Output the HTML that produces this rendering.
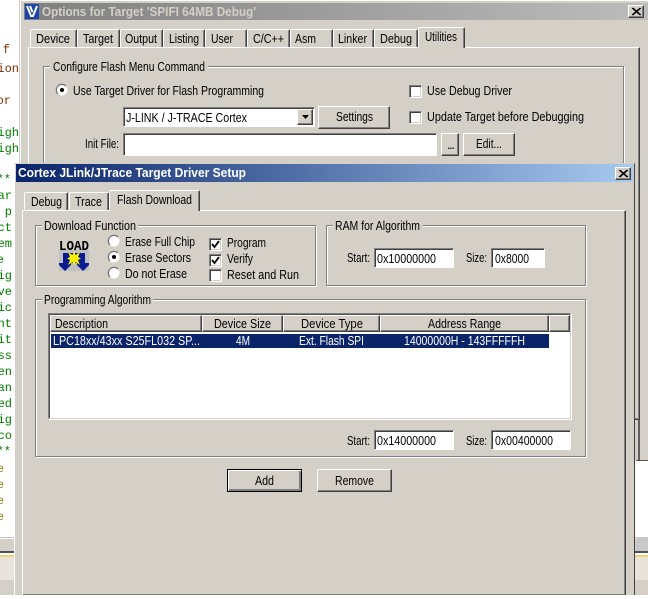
<!DOCTYPE html>
<html><head><meta charset="utf-8"><style>
html,body{margin:0;padding:0;background:#fff}
#r{position:relative;width:648px;height:599px;overflow:hidden;background:#fff}
#r div{position:absolute;box-sizing:border-box}
.g{background:#d4d0c8}
.btn{background:#d4d0c8;border:1px solid;border-color:#fff #404040 #404040 #fff;box-shadow:inset -1px -1px #808080}
.in{background:#fff;border:1px solid;border-color:#808080 #fff #fff #808080;box-shadow:inset 1px 1px #404040}
.grp{border:1px solid #808080;box-shadow:1px 1px #fff,inset 1px 1px #fff}
.page{background:#d4d0c8;border:1px solid;border-color:#fff #404040 #404040 #fff;box-shadow:inset -1px -1px #808080}
.tab{background:#d4d0c8;border:1px solid;border-color:#fff #404040 transparent #fff;border-bottom:0;border-radius:2px 2px 0 0;box-shadow:inset -1px 0 #808080}
.hd{background:#d4d0c8;border:1px solid;border-color:#fff #404040 #404040 #fff;box-shadow:inset -1px -1px #808080}
.chk{background:#fff;border:1px solid;border-color:#808080 #fff #fff #808080;box-shadow:inset 1px 1px #404040,inset -1px -1px #d4d0c8}
svg{position:absolute;left:0;top:0}
text{font-family:"Liberation Sans",sans-serif;font-size:12.5px;fill:#000}
.t{font-weight:bold;font-size:12.5px}
.m{font-family:"Liberation Mono",monospace;font-size:12px;text-anchor:end}
.br{fill:#8a2c00}.gr{fill:#008000}.ol{fill:#808000}
</style></head><body><div id="r">

<!-- background strips behind dialogs -->
<div style="left:0;top:537px;width:648px;height:1px;background:#c8c4bc"></div>
<div class="g" style="left:0;top:539px;width:648px;height:12px"></div>
<div style="left:0;top:551px;width:648px;height:2px;background:#505050"></div>
<div style="left:0;top:555px;width:648px;height:2px;background:#f8d070"></div>
<div style="left:0;top:557px;width:648px;height:23px;background:#e8e4dc"></div>
<div class="g" style="left:0;top:580px;width:648px;height:15px"></div>
<div style="left:636px;top:537px;width:12px;height:14px;background:#c8c8c8"></div>

<!-- outer dialog -->
<div class="g" style="left:19px;top:0;width:640px;height:460px;border-left:1px solid #d4d0c8;box-shadow:inset 1px 1px #fff"></div>
<div style="left:636px;top:460px;width:12px;height:1px;background:#505050"></div>
<div style="left:24px;top:3px;width:624px;height:17px;background:linear-gradient(90deg,#808080,#bcbcbc)"></div>
<div class="btn" style="left:628px;top:5px;width:16px;height:13px"></div>

<div class="page" style="left:28px;top:47px;width:612px;height:373px"></div>
<div style="left:638px;top:420px;width:2px;height:40px;background:#606060"></div>
<div class="tab" style="left:30px;top:29px;width:47px;height:18px"></div>
<div class="tab" style="left:77px;top:29px;width:43px;height:18px"></div>
<div class="tab" style="left:120px;top:29px;width:43px;height:18px"></div>
<div class="tab" style="left:163px;top:29px;width:42px;height:18px"></div>
<div class="tab" style="left:205px;top:29px;width:42px;height:18px"></div>
<div class="tab" style="left:247px;top:29px;width:43px;height:18px"></div>
<div class="tab" style="left:290px;top:29px;width:43px;height:18px"></div>
<div class="tab" style="left:333px;top:29px;width:41px;height:18px"></div>
<div class="tab" style="left:374px;top:29px;width:44px;height:18px"></div>
<div class="tab" style="left:418px;top:27px;width:47px;height:21px"></div>

<div class="grp" style="left:43px;top:66px;width:581px;height:120px"></div>
<div class="g" style="left:50px;top:62px;width:158px;height:10px"></div>
<div class="chk" style="left:409px;top:85px;width:13px;height:13px"></div>
<div class="chk" style="left:409px;top:111px;width:13px;height:13px"></div>
<div class="in" style="left:123px;top:107px;width:192px;height:20px"></div>
<div class="btn" style="left:297px;top:109px;width:16px;height:16px"></div>
<div class="btn" style="left:318px;top:106px;width:72px;height:23px"></div>
<div class="in" style="left:123px;top:133px;width:314px;height:23px"></div>
<div class="btn" style="left:441px;top:133px;width:18px;height:23px"></div>
<div class="btn" style="left:463px;top:133px;width:52px;height:23px"></div>

<!-- inner dialog -->
<div class="g" style="left:14px;top:163px;width:621px;height:432px;border-top:1px solid #d4d0c8;border-left:1px solid #fff;border-right:1px solid #404040;box-shadow:inset 1px 0 #d4d0c8"></div>
<div style="left:16px;top:164px;width:617px;height:18px;background:linear-gradient(90deg,#0a246a,#a6caf0)"></div>
<div class="btn" style="left:615px;top:167px;width:16px;height:13px"></div>

<div class="page" style="left:22px;top:210px;width:604px;height:385px;border-bottom:0"></div>
<div class="tab" style="left:24px;top:192px;width:44px;height:18px"></div>
<div class="tab" style="left:69px;top:192px;width:40px;height:18px"></div>
<div class="tab" style="left:109px;top:190px;width:91px;height:21px"></div>

<div class="grp" style="left:35px;top:225px;width:281px;height:61px"></div>
<div class="g" style="left:42px;top:221px;width:96px;height:10px"></div>
<div class="grp" style="left:326px;top:225px;width:260px;height:61px"></div>
<div class="g" style="left:333px;top:221px;width:90px;height:10px"></div>
<div class="grp" style="left:35px;top:299px;width:551px;height:158px"></div>
<div class="g" style="left:42px;top:295px;width:111px;height:10px"></div>

<div class="chk" style="left:209px;top:238px;width:13px;height:13px"></div>
<div class="chk" style="left:209px;top:254px;width:13px;height:13px"></div>
<div class="chk" style="left:209px;top:269px;width:13px;height:13px"></div>

<div class="in" style="left:374px;top:248px;width:80px;height:20px"></div>
<div class="in" style="left:491px;top:248px;width:54px;height:20px"></div>

<!-- list -->
<div class="in" style="left:48px;top:313px;width:523px;height:106px;border-color:#808080 #d4d0c8 #d4d0c8 #808080;box-shadow:inset 1px 1px #505050,1px 1px #fff"></div>
<div class="hd" style="left:50px;top:315px;width:152px;height:17px"></div>
<div class="hd" style="left:202px;top:315px;width:81px;height:17px"></div>
<div class="hd" style="left:283px;top:315px;width:97px;height:17px"></div>
<div class="hd" style="left:380px;top:315px;width:169px;height:17px"></div>
<div class="hd" style="left:549px;top:315px;width:21px;height:17px"></div>
<div style="left:51px;top:334px;width:498px;height:14px;background:#0a246a"></div>

<div class="in" style="left:374px;top:430px;width:80px;height:20px"></div>
<div class="in" style="left:491px;top:430px;width:80px;height:20px"></div>

<div class="btn" style="left:227px;top:469px;width:75px;height:23px;outline:1px solid #000;outline-offset:-1px;box-shadow:inset 1px 1px #fff,inset -2px -2px #808080"></div>
<div class="btn" style="left:317px;top:469px;width:75px;height:23px"></div>

<svg width="648" height="599" viewBox="0 0 648 599">
<defs>
<clipPath id="c1"><rect x="0" y="0" width="19" height="163"/></clipPath>
<clipPath id="c2"><rect x="0" y="163" width="13" height="374"/></clipPath>
</defs>
<g clip-path="url(#c1)">
<text class="m br" x="10" y="53">f</text>
<text class="m br" x="19" y="72">tion</text>
<text class="m br" x="11" y="104">or</text>
<text class="m gr" x="19" y="136">igh</text>
<text class="m gr" x="19" y="152">igh</text>
</g>
<g clip-path="url(#c2)">
<text class="m gr" x="11" y="183">***</text>
<text class="m gr" x="12" y="199">ar</text>
<text class="m gr" x="12" y="215">p</text>
<text class="m gr" x="12" y="231">ct</text>
<text class="m gr" x="12" y="247">em</text>
<text class="m gr" x="4" y="263">e</text>
<text class="m gr" x="12" y="279">ig</text>
<text class="m gr" x="12" y="295">ve</text>
<text class="m gr" x="12" y="311">ic</text>
<text class="m gr" x="12" y="327">nt</text>
<text class="m gr" x="12" y="343">it</text>
<text class="m gr" x="12" y="359">ss</text>
<text class="m gr" x="12" y="375">en</text>
<text class="m gr" x="12" y="391">an</text>
<text class="m gr" x="12" y="407">ed</text>
<text class="m gr" x="12" y="423">ig</text>
<text class="m gr" x="12" y="439">co</text>
<text class="m gr" x="11" y="455">***</text>
<text class="m ol" x="4" y="472">e</text>
<text class="m ol" x="4" y="488">e</text>
<text class="m ol" x="4" y="504">e</text>
<text class="m ol" x="4" y="520">e</text>
</g>

<!-- V logo -->
<rect x="25" y="4" width="14" height="15" fill="#1a44a8"/>
<path d="M27 6 L31 16 L33 16 L37 6 M30 6 L32.500 12" stroke="#fff" stroke-width="2" fill="none"/>
<!-- titles -->
<text class="t" x="42" y="16" textLength="214" lengthAdjust="spacingAndGlyphs" style="fill:#d4d0c8">Options for Target 'SPIFI 64MB Debug'</text>
<text class="t" x="18" y="177" textLength="228" lengthAdjust="spacingAndGlyphs" style="fill:#fff">Cortex JLink/JTrace Target Driver Setup</text>
<path d="M632 8 L640 15 M640 8 L632 15 M633 8 L641 15 M641 8 L633 15" stroke="#000" stroke-width="1" fill="none"/>
<path d="M619 170 L627 177 M627 170 L619 177 M620 170 L628 177 M628 170 L620 177" stroke="#000" stroke-width="1" fill="none"/>

<!-- outer tabs -->
<text x="36" y="43" textLength="34" lengthAdjust="spacingAndGlyphs">Device</text>
<text x="83" y="43" textLength="30" lengthAdjust="spacingAndGlyphs">Target</text>
<text x="125" y="43" textLength="32" lengthAdjust="spacingAndGlyphs">Output</text>
<text x="169" y="43" textLength="30" lengthAdjust="spacingAndGlyphs">Listing</text>
<text x="211" y="43" textLength="22" lengthAdjust="spacingAndGlyphs">User</text>
<text x="253" y="43" textLength="31" lengthAdjust="spacingAndGlyphs">C/C++</text>
<text x="295" y="43" textLength="21" lengthAdjust="spacingAndGlyphs">Asm</text>
<text x="338" y="43" textLength="29" lengthAdjust="spacingAndGlyphs">Linker</text>
<text x="380" y="43" textLength="32" lengthAdjust="spacingAndGlyphs">Debug</text>
<text x="425" y="41" textLength="32" lengthAdjust="spacingAndGlyphs">Utilities</text>

<text x="53" y="71" textLength="152" lengthAdjust="spacingAndGlyphs">Configure Flash Menu Command</text>
<circle cx="62" cy="90" r="5.500" fill="#fff"/>
<path d="M58 94 A5.500 5.500 0 0 1 66 86" stroke="#707070" stroke-width="1.200" fill="none"/>
<circle cx="62" cy="90" r="2" fill="#000"/>
<text x="73" y="95" textLength="191" lengthAdjust="spacingAndGlyphs">Use Target Driver for Flash Programming</text>
<text x="427" y="95" textLength="85" lengthAdjust="spacingAndGlyphs">Use Debug Driver</text>
<text x="427" y="121" textLength="157" lengthAdjust="spacingAndGlyphs">Update Target before Debugging</text>
<text x="126" y="122" textLength="121" lengthAdjust="spacingAndGlyphs">J-LINK / J-TRACE Cortex</text>
<path d="M302 115 H309 L305.500 119 Z" fill="#000"/>
<text x="336" y="121" textLength="37" lengthAdjust="spacingAndGlyphs">Settings</text>
<text x="85" y="148" textLength="34" lengthAdjust="spacingAndGlyphs">Init File:</text>
<text x="447" y="149" textLength="8">...</text>
<text x="476" y="148" textLength="26" lengthAdjust="spacingAndGlyphs">Edit...</text>

<!-- inner tabs -->
<text x="31" y="206" textLength="31" lengthAdjust="spacingAndGlyphs">Debug</text>
<text x="75" y="206" textLength="27" lengthAdjust="spacingAndGlyphs">Trace</text>
<text x="117" y="204" textLength="75" lengthAdjust="spacingAndGlyphs">Flash Download</text>

<text x="44" y="230" textLength="92" lengthAdjust="spacingAndGlyphs">Download Function</text>
<text x="335" y="230" textLength="85" lengthAdjust="spacingAndGlyphs">RAM for Algorithm</text>
<text x="44" y="304" textLength="107" lengthAdjust="spacingAndGlyphs">Programming Algorithm</text>

<!-- LOAD icon -->
<rect x="59" y="250" width="30" height="21" fill="#c0c0c0"/>
<text x="59" y="250" textLength="30" lengthAdjust="spacingAndGlyphs" style="font-family:'Liberation Mono',monospace;font-weight:bold;font-size:14px">LOAD</text>
<path d="M63 253 H85 V263 H89 V265 L83 271 L77 265 V263 H71 V265 L65 271 L59 265 V263 H63 Z" fill="#0a1a90"/>
<path d="M74 251 L75.500 255 L80 252 L78 257 L81 258.500 L78 260 L80 265 L75.500 262 L74 266 L72.500 262 L68 265 L70 260 L67 258.500 L70 257 L68 252 L72.500 255 Z" fill="#f8f000"/>

<!-- radios -->
<g fill="#fff"><circle cx="114" cy="241" r="5.500"/><circle cx="114" cy="257" r="5.500"/><circle cx="114" cy="273" r="5.500"/></g>
<g stroke="#707070" stroke-width="1.200" fill="none">
<path d="M110 245 A5.500 5.500 0 0 1 118 237"/><path d="M110 261 A5.500 5.500 0 0 1 118 253"/><path d="M110 277 A5.500 5.500 0 0 1 118 269"/>
</g>
<circle cx="114" cy="257" r="2" fill="#000"/>
<text x="125" y="246" textLength="70" lengthAdjust="spacingAndGlyphs">Erase Full Chip</text>
<text x="125" y="262" textLength="66" lengthAdjust="spacingAndGlyphs">Erase Sectors</text>
<text x="125" y="278" textLength="62" lengthAdjust="spacingAndGlyphs">Do not Erase</text>
<path d="M212 244 L214.500 247 L219 241 M212 260 L214.500 263 L219 257" stroke="#000" stroke-width="1.800" fill="none"/>
<text x="227" y="247" textLength="39" lengthAdjust="spacingAndGlyphs">Program</text>
<text x="227" y="263" textLength="26" lengthAdjust="spacingAndGlyphs">Verify</text>
<text x="227" y="279" textLength="72" lengthAdjust="spacingAndGlyphs">Reset and Run</text>

<text x="347" y="262" textLength="23" lengthAdjust="spacingAndGlyphs">Start:</text>
<text x="377" y="263" textLength="59" lengthAdjust="spacingAndGlyphs">0x10000000</text>
<text x="466" y="262" textLength="21" lengthAdjust="spacingAndGlyphs">Size:</text>
<text x="495" y="263" textLength="34" lengthAdjust="spacingAndGlyphs">0x8000</text>

<text x="55" y="328" textLength="53" lengthAdjust="spacingAndGlyphs">Description</text>
<text x="214" y="328" textLength="57" lengthAdjust="spacingAndGlyphs">Device Size</text>
<text x="301" y="328" textLength="62" lengthAdjust="spacingAndGlyphs">Device Type</text>
<text x="428" y="328" textLength="73" lengthAdjust="spacingAndGlyphs">Address Range</text>
<text x="53" y="345" textLength="147" lengthAdjust="spacingAndGlyphs" style="fill:#fff">LPC18xx/43xx S25FL032 SP...</text>
<text x="236" y="345" textLength="14" lengthAdjust="spacingAndGlyphs" style="fill:#fff">4M</text>
<text x="299" y="345" textLength="65" lengthAdjust="spacingAndGlyphs" style="fill:#fff">Ext. Flash SPI</text>
<text x="404" y="345" textLength="121" lengthAdjust="spacingAndGlyphs" style="fill:#fff">14000000H - 143FFFFFH</text>

<text x="347" y="445" textLength="23" lengthAdjust="spacingAndGlyphs">Start:</text>
<text x="377" y="445" textLength="59" lengthAdjust="spacingAndGlyphs">0x14000000</text>
<text x="466" y="445" textLength="21" lengthAdjust="spacingAndGlyphs">Size:</text>
<text x="495" y="445" textLength="58" lengthAdjust="spacingAndGlyphs">0x00400000</text>
<text x="255" y="485" textLength="19" lengthAdjust="spacingAndGlyphs">Add</text>
<text x="335" y="485" textLength="39" lengthAdjust="spacingAndGlyphs">Remove</text>
</svg>
</div></body></html>
